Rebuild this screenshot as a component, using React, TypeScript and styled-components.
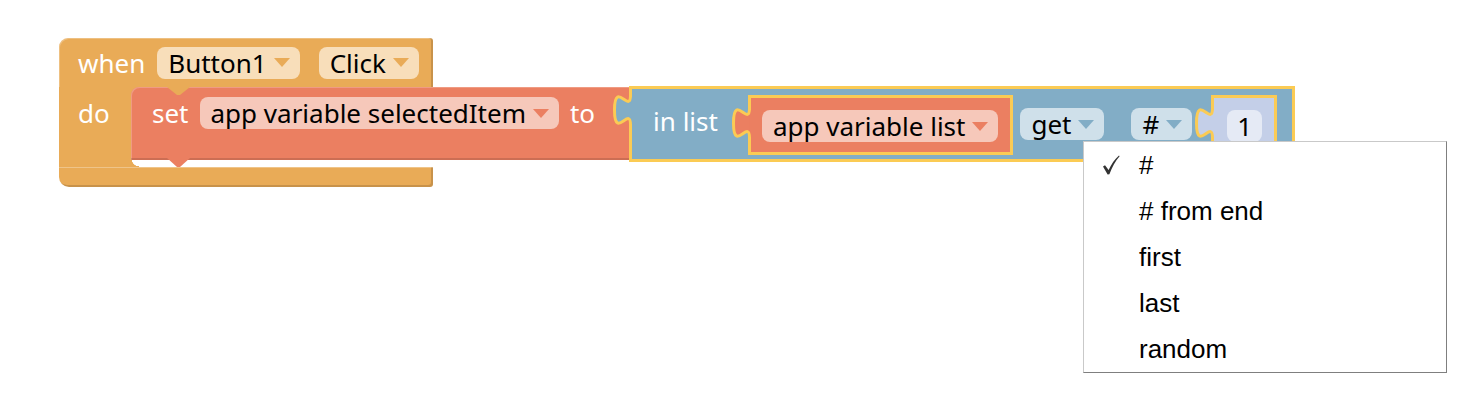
import styled, { createGlobalStyle } from "styled-components";

const orange = "#E9AB57";
const orangeField = "#F8DEBA";
const red = "#EB7F61";
const redField = "#F6C8BA";
const blue = "#82ADC6";
const blueField = "#CFE0EA";
const lavender = "#C4CFE8";
const numField = "#E5EAF5";
const yellow = "#FBCB54";

const Global = createGlobalStyle`
	* { box-sizing: border-box; }
	body {
		margin: 0;
		background: #fff;
		font-family: "Noto Sans", "Open Sans", sans-serif;
	}
`

const Workspace = styled.div`
	position: relative;
	width: 1484px;
	height: 418px;
	overflow: hidden;
	background: #fff;
`

const EventBlock = styled.div`
	position: absolute;
	left: 59px;
	top: 38px;
	width: 374px;
	display: flex;
	flex-direction: column;
`

const HatBar = styled.div`
	display: flex;
	align-items: center;
	height: 49px;
	padding: 0 10px 0 19px;
	background: ${orange};
	border-radius: 9px 3px 0 0;
	box-shadow: inset -2px 0 0 rgba(0, 0, 0, 0.14), inset 1px 1px 0 rgba(255, 255, 255, 0.25);
`

const Mouth = styled.div`
	display: flex;
`

const Arm = styled.div`
	flex: none;
	width: 72px;
	padding: 10px 0 0 19px;
	background: ${orange};
`

const Slot = styled.div`
	flex: none;
	display: flex;
	flex-direction: column;
	padding-bottom: 7px;
	background:
		linear-gradient(${orange}, ${orange}) no-repeat 0 0 / 10px 10px,
		radial-gradient(circle at 100% 0, transparent 7px, ${orange} 7.5px) no-repeat 0 100% / 8px 8px;
`

const FootBar = styled.div`
	height: 20px;
	background: ${orange};
	border-radius: 0 0 3px 10px;
	box-shadow: inset 0 1px 0 rgba(255, 255, 255, 0.3), inset -2px -2px 0 rgba(0, 0, 0, 0.14);
`

const Label = styled.span<{ $ml?: number; $mt?: number }>`
	flex: none;
	margin-left: ${(p) => p.$ml ?? 0}px;
	margin-top: ${(p) => p.$mt ?? 0}px;
	color: #fff;
	font-size: 26px;
	line-height: 32px;
	white-space: nowrap;
`

const Field = styled.span<{ $bg: string; $ml?: number; $mt?: number; $pad?: string }>`
	flex: none;
	display: inline-flex;
	align-items: center;
	height: 32px;
	margin-left: ${(p) => p.$ml ?? 0}px;
	margin-top: ${(p) => p.$mt ?? 0}px;
	padding: ${(p) => p.$pad ?? "0 10px 0 11px"};
	border-radius: 8px;
	background: ${(p) => p.$bg};
	color: #000;
	font-size: 26px;
	line-height: 32px;
	white-space: nowrap;
`

const Arrow = styled.span<{ $color: string }>`
	width: 0;
	height: 0;
	margin-left: 7px;
	border-left: 8px solid transparent;
	border-right: 8px solid transparent;
	border-top: 9px solid ${(p) => p.$color};
`

const StackBlock = styled.div`
	display: flex;
	align-items: stretch;
`

const SetBody = styled.div`
	position: relative;
	display: flex;
	align-items: flex-start;
	padding: 10px 35px 0 21px;
	background: ${red};
	border-radius: 8px 0 0 0;
	box-shadow: inset 0 -2px 0 rgba(0, 0, 0, 0.13), inset 1px 1px 0 rgba(255, 255, 255, 0.22);
`

const Notch = styled.svg<{ $bottom?: boolean }>`
	position: absolute;
	left: 36px;
	${(p) => (p.$bottom ? "top: 100%;" : "top: 0;")}
	overflow: visible;
`

const ValueBlock = styled.div<{ $bg: string; $ml?: number; $pad: string }>`
	position: relative;
	flex: none;
	display: flex;
	align-items: flex-start;
	margin-left: ${(p) => p.$ml ?? 0}px;
	padding: ${(p) => p.$pad};
	border: 3px solid ${yellow};
	background: ${(p) => p.$bg};
`

// the attached input block overlaps its parent by its outline
const InputBlock = styled(ValueBlock)`
	margin: -1px 0 -2px -1px;
`

const TabSvg = styled.svg<{ $top: number }>`
	position: absolute;
	left: -19px;
	top: ${(p) => p.$top}px;
	overflow: visible;
`

const Menu = styled.div`
	position: absolute;
	left: 1083px;
	top: 141px;
	width: 364px;
	background: #fff;
	border: 1px solid #c9c9c9;
	border-right-color: #7f7f7f;
	border-bottom-color: #7f7f7f;
	font-family: "Liberation Sans", Arial, sans-serif;
	font-size: 26px;
	color: #000;
`

const MenuItem = styled.div`
	display: flex;
	align-items: center;
	height: 46px;
	line-height: 46px;
	white-space: nowrap;
`

const CheckCell = styled.span`
	flex: none;
	display: flex;
	align-items: center;
	width: 55px;
	padding-left: 18px;
`

function Dropdown(props: { text: string; bg: string; arrow: string; ml?: number; mt?: number }) {
	return (
		<Field $bg={props.bg} $ml={props.ml} $mt={props.mt}>
			{props.text}
			<Arrow $color={props.arrow} />
		</Field>
	);
}

function Tab(props: { color: string; top: number }) {
	return (
		<TabSvg $top={props.top} width="22" height="31" viewBox="0 0 22 31">
			<rect x="16" y="2" width="5" height="27" fill={props.color} />
			<path d="M17.5 0c0 20-16-16-16 15s16-5 16 15" fill={props.color} stroke={yellow} strokeWidth="3" />
		</TabSvg>
	);
}

function Check() {
	return (
		<svg width="18" height="20" viewBox="0 0 18 20">
			<path d="M1 11.5l2-1.2 3.6 4.6C9.5 9 12.8 4.2 17 .5l.6.7C13.4 6 10.2 11.6 7.4 19.2L5.6 19.4z" fill="#333" />
		</svg>
	);
}

const menuOptions = ["#", "# from end", "first", "last", "random"];

export default function App() {
	return (
		<>
			<Global />
			<Workspace>
				<EventBlock>
					<HatBar>
						<Label>when</Label>
						<Dropdown text="Button1" bg={orangeField} arrow={orange} ml={12} />
						<Dropdown text="Click" bg={orangeField} arrow={orange} ml={19} />
					</HatBar>
					<Mouth>
						<Arm>
							<Label>do</Label>
						</Arm>
						<Slot>
							<StackBlock>
								<SetBody>
									<Notch width="23" height="8">
										<polygon points="0,0 10,8 13,8 23,0" fill={orange} />
									</Notch>
									<Notch $bottom width="23" height="8">
										<polygon points="0,-2 10,7 13,7 23,-2" fill={red} />
									</Notch>
									<Label>set</Label>
									<Dropdown text="app variable selectedItem" bg={redField} arrow={red} ml={11} />
									<Label $ml={11}>to</Label>
								</SetBody>
								<InputBlock $bg={blue} $pad="6px 15px 4px 21px">
									<Tab color={blue} top={6} />
									<Label $mt={10}>in list</Label>
									<ValueBlock $bg={red} $ml={30} $pad="12px 12px 10px 11px">
										<Tab color={red} top={10} />
										<Dropdown text="app variable list" bg={redField} arrow={red} />
									</ValueBlock>
									<Dropdown text="get" bg={blueField} arrow={blue} ml={7} mt={13} />
									<Dropdown text="#" bg={blueField} arrow={blue} ml={27} mt={13} />
									<ValueBlock $bg={lavender} $ml={19} $pad="12px 12px 10px 13px">
										<Tab color={lavender} top={10} />
										<Field $bg={numField} $pad="0 10px">1</Field>
									</ValueBlock>
								</InputBlock>
							</StackBlock>
						</Slot>
					</Mouth>
					<FootBar />
				</EventBlock>
				<Menu>
					{menuOptions.map((opt, i) => (
						<MenuItem key={opt}>
							<CheckCell>{i === 0 && <Check />}</CheckCell>
							{opt}
						</MenuItem>
					))}
				</Menu>
			</Workspace>
		</>
	);
}
